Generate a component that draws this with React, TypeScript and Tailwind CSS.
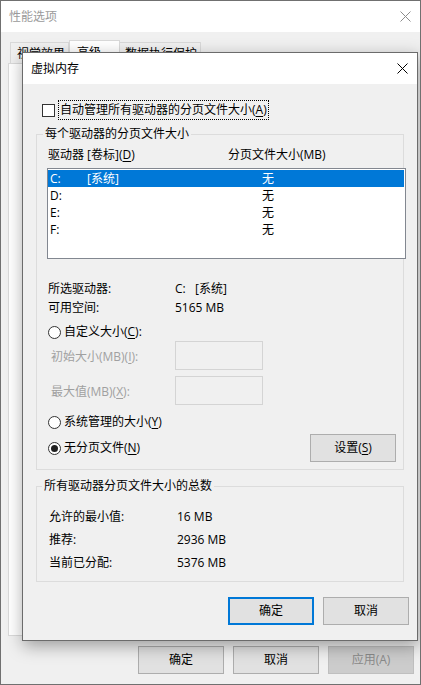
import React from 'react';

const CloseGlyph = ({ color }: { color: string }) => (
  <svg width="11" height="11" viewBox="0 0 11 11" className="block">
    <path d="M0.5 0.5 L10.5 10.5 M10.5 0.5 L0.5 10.5" stroke={color} strokeWidth="1" />
  </svg>
);

const Radio = ({ checked }: { checked?: boolean }) => (
  <span className="w-[13px] h-[13px] rounded-full border border-[#333333] bg-white flex items-center justify-center shrink-0">
    {checked && <span className="w-[7px] h-[7px] rounded-full bg-[#1f1f1f]" />}
  </span>
);

const Key = ({ k }: { k: string }) => <u className="underline-offset-2">{k}</u>;

const drives = [
  { letter: 'C:', label: '[系统]', size: '无', selected: true },
  { letter: 'D:', label: '', size: '无' },
  { letter: 'E:', label: '', size: '无' },
  { letter: 'F:', label: '', size: '无' },
];

const totals = [
  { label: '允许的最小值:', value: '16 MB' },
  { label: '推荐:', value: '2936 MB' },
  { label: '当前已分配:', value: '5376 MB' },
];

const App: React.FC = () => {
  return (
    <div className="w-[421px] h-[685px] relative border border-[#707070] bg-[#f0f0f0] flex flex-col text-[12px] text-black font-['Open_Sans','Noto_Sans_CJK_SC',sans-serif] overflow-hidden">
      {/* 背景窗口：性能选项 */}
      <div className="h-[31px] bg-white flex items-center justify-between pl-[8px] pr-[9px] shrink-0">
        <span className="text-[#9a9a9a] leading-[16px]">性能选项</span>
        <CloseGlyph color="#8c8c8c" />
      </div>
      <div className="flex items-end ml-[9px] mt-[8px] h-[23px] shrink-0">
        <div className="h-[21px] w-[59px] border border-b-0 border-[#d9d9d9] bg-[#f0f0f0] pl-[6px] pt-[3px] leading-[16px]">视觉效果</div>
        <div className="h-[23px] w-[51px] border border-b-0 border-[#d9d9d9] bg-white pl-[7px] pt-[4px] leading-[16px]">高级</div>
        <div className="h-[21px] w-[81px] border border-b-0 border-l-0 border-[#d9d9d9] bg-[#f0f0f0] pl-[5px] pt-[3px] leading-[16px]">数据执行保护</div>
      </div>
      <div className="mx-[7px] h-[573px] border border-[#d9d9d9] bg-white shrink-0" />
      <div className="flex justify-end gap-[9px] pr-[6px] mt-[10px]">
        <button className="w-[86px] h-[28px] border border-[#adadad] bg-[#e1e1e1]">确定</button>
        <button className="w-[86px] h-[28px] border border-[#adadad] bg-[#e1e1e1]">取消</button>
        <button className="w-[86px] h-[28px] border border-[#bfbfbf] bg-[#cccccc] text-[#8a8a8a]">应用(A)</button>
      </div>

      {/* 前景对话框：虚拟内存 */}
      <div className="absolute left-[21px] top-[51px] w-[396px] h-[589px] border border-[#6b6b6b] bg-[#f0f0f0] flex flex-col shadow-[1px_5px_16px_rgba(0,0,0,0.35)]">
        <div className="h-[31px] bg-white flex items-center justify-between pl-[8px] pr-[9px] shrink-0">
          <span className="leading-[16px]">虚拟内存</span>
          <CloseGlyph color="#000000" />
        </div>

        <div className="flex items-center ml-[19px] mt-[16px] h-[20px]">
          <span className="w-[13px] h-[13px] border border-[#333333] bg-white shrink-0" />
          <span className="ml-[3px] h-[20px] px-[1px] border border-dotted border-black leading-[17px]">
            自动管理所有驱动器的分页文件大小(<Key k="A" />)
          </span>
        </div>

        <fieldset className="ml-[13px] w-[368px] min-w-0 mt-[6px] border border-[#dcdcdc] pb-[7px]">
          <legend className="ml-[6px] px-[2px] leading-[16px]">每个驱动器的分页文件大小</legend>
          <div className="flex pl-[11px] mt-[5px] leading-[16px]">
            <span className="w-[180px]">驱动器 [卷标](<Key k="D" />)</span>
            <span>分页文件大小(MB)</span>
          </div>
          <div className="ml-[10px] mt-[5px] w-[359px] h-[91px] border border-[#828790] bg-white pt-[1px] pr-[1px]">
            {drives.map((d) => (
              <div
                key={d.letter}
                className={`flex h-[17px] items-center pl-[2px] leading-[16px] ${d.selected ? 'bg-[#0078d7] text-white' : ''}`}
              >
                <span className="w-[37px]">{d.letter}</span>
                <span className="w-[175px]">{d.label}</span>
                <span>{d.size}</span>
              </div>
            ))}
          </div>

          <div className="flex pl-[11px] mt-[20px] h-[19px] items-center">
            <span className="w-[127px]">所选驱动器:</span>
            <span>C:&nbsp;&nbsp;&nbsp;[系统]</span>
          </div>
          <div className="flex pl-[11px] h-[19px] items-center">
            <span className="w-[127px]">可用空间:</span>
            <span>5165 MB</span>
          </div>

          <div className="flex pl-[11px] mt-[6px] h-[18px] items-center gap-[3px]">
            <Radio />
            <span>自定义大小(<Key k="C" />):</span>
          </div>
          <div className="flex pl-[14px] h-[29px] items-center">
            <span className="w-[124px] text-[#a0a0a0] pt-[3px]">初始大小(MB)(<Key k="I" />):</span>
            <span className="w-[88px] h-[29px] border border-[#d4d4d4] bg-[#f0f0f0]" />
          </div>
          <div className="flex pl-[14px] mt-[6px] h-[29px] items-center">
            <span className="w-[124px] text-[#a0a0a0] pt-[3px]">最大值(MB)(<Key k="X" />):</span>
            <span className="w-[88px] h-[29px] border border-[#d4d4d4] bg-[#f0f0f0]" />
          </div>

          <div className="flex pl-[11px] mt-[8px] h-[18px] items-center gap-[3px]">
            <Radio />
            <span>系统管理的大小(<Key k="Y" />)</span>
          </div>
          <div className="flex pl-[11px] pr-[7px] mt-[3px] h-[28px] items-center justify-between">
            <div className="flex items-center gap-[3px]">
              <Radio checked />
              <span>无分页文件(<Key k="N" />)</span>
            </div>
            <button className="w-[86px] h-[28px] border border-[#adadad] bg-[#e1e1e1]">
              设置(<Key k="S" />)
            </button>
          </div>
        </fieldset>

        <fieldset className="ml-[13px] w-[368px] min-w-0 mt-[8px] border border-[#dcdcdc] pb-[7px]">
          <legend className="ml-[5px] px-[2px] leading-[16px]">所有驱动器分页文件大小的总数</legend>
          <div className="mt-[11px]">
            {totals.map((t) => (
              <div key={t.label} className="flex pl-[12px] h-[23px] items-center">
                <span className="w-[128px]">{t.label}</span>
                <span>{t.value}</span>
              </div>
            ))}
          </div>
        </fieldset>

        <div className="flex justify-end gap-[9px] pr-[8px] mt-[15px]">
          <button className="w-[86px] h-[28px] border-2 border-[#0078d7] bg-[#e1e1e1]">确定</button>
          <button className="w-[86px] h-[28px] border border-[#adadad] bg-[#e1e1e1]">取消</button>
        </div>
      </div>
    </div>
  );
};

export default App;
